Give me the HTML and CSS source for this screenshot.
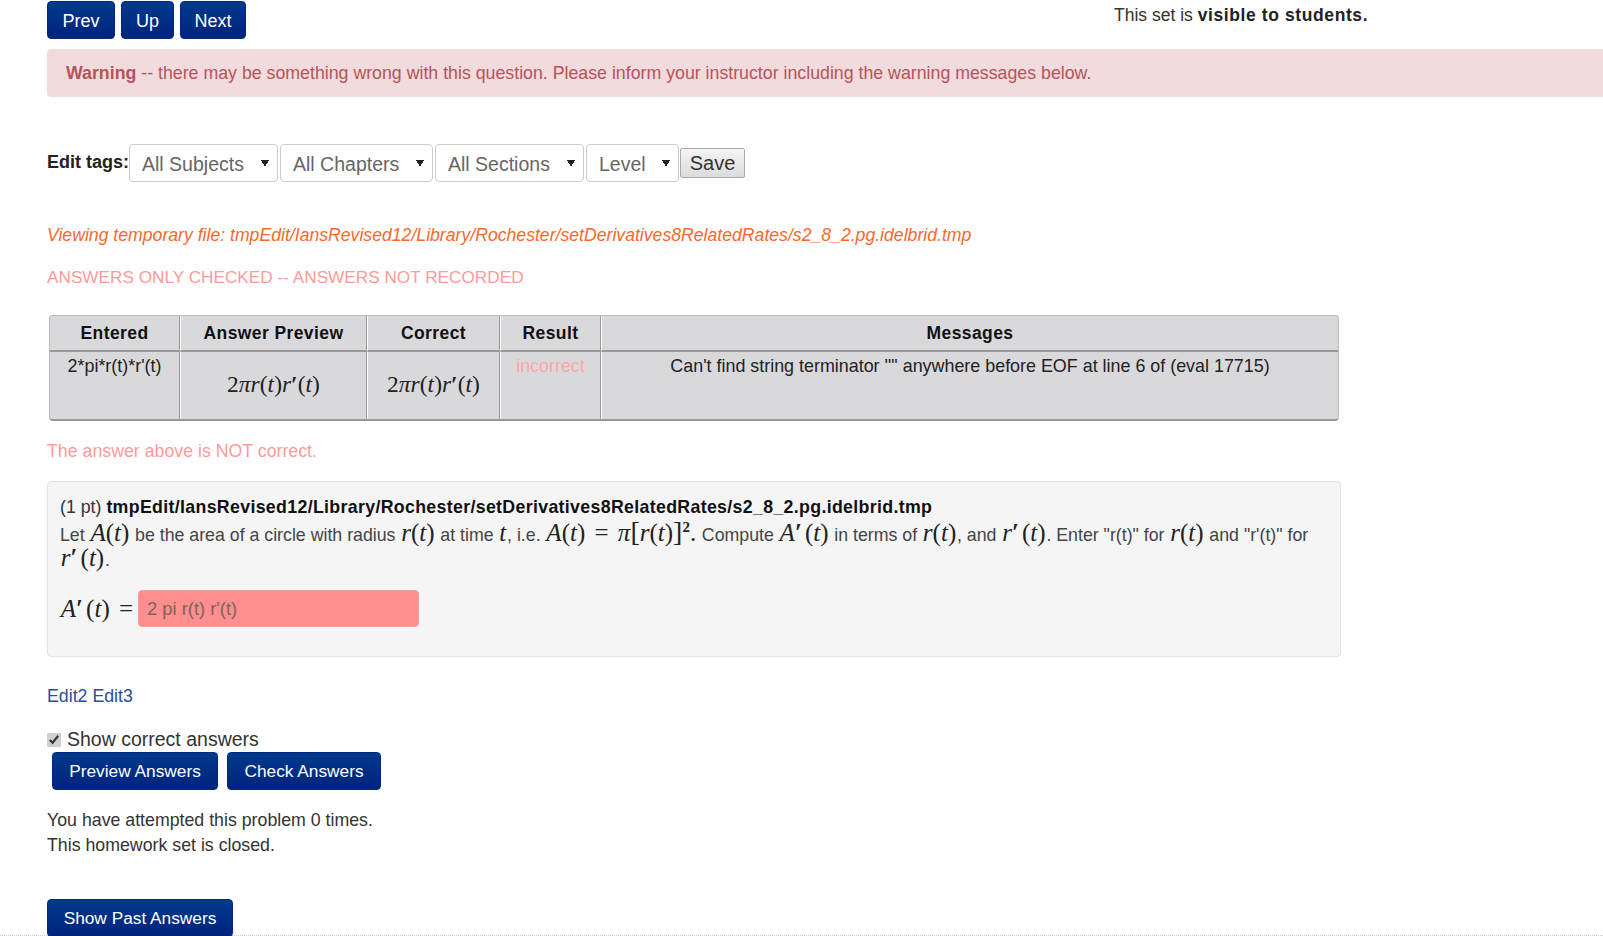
FILE: index.html
```html
<!DOCTYPE html>
<html lang="en">

<head>
    <meta charset="UTF-8">
    <title>Problem</title>
    <link rel="stylesheet" href="styles.css">
</head>

<body>
    <div class="page">
        <div class="topbar">
            <div class="nav">
                <a class="btn btn-prev">Prev</a>
                <a class="btn btn-up">Up</a>
                <a class="btn btn-next">Next</a>
            </div>
            <p class="set-note">This set is <b>visible to students.</b></p>
        </div>

        <div class="warning"><b>Warning</b> -- there may be something wrong with this question. Please inform your instructor including the warning messages below.</div>

        <form class="tags">
            <label class="tags-label">Edit tags:</label>
            <select class="tag-select subjects"><option>All Subjects</option></select>
            <select class="tag-select chapters"><option>All Chapters</option></select>
            <select class="tag-select sections"><option>All Sections</option></select>
            <select class="tag-select level"><option>Level</option></select>
            <button type="button" class="save">Save</button>
        </form>

        <p class="temp-file">Viewing temporary file: tmpEdit/IansRevised12/Library/Rochester/setDerivatives8RelatedRates/s2_8_2.pg.idelbrid.tmp</p>
        <p class="checked-note">ANSWERS ONLY CHECKED -- ANSWERS NOT RECORDED</p>

        <table class="results">
            <tr>
                <th class="col-entered">Entered</th>
                <th class="col-preview">Answer Preview</th>
                <th class="col-correct">Correct</th>
                <th class="col-result">Result</th>
                <th>Messages</th>
            </tr>
            <tr>
                <td>2*pi*r(t)*r'(t)</td>
                <td class="math-cell"><span class="math big"><span class="up">2</span>πr<span class="up">(</span>t<span class="up">)</span>r<span class="prime">′</span><span class="up">(</span>t<span class="up">)</span></span></td>
                <td class="math-cell"><span class="math big"><span class="up">2</span>πr<span class="up">(</span>t<span class="up">)</span>r<span class="prime">′</span><span class="up">(</span>t<span class="up">)</span></span></td>
                <td class="incorrect">incorrect</td>
                <td>Can't find string terminator '"' anywhere before EOF at line 6 of (eval 17715)</td>
            </tr>
        </table>

        <p class="not-correct">The answer above is NOT correct.</p>

        <div class="problem">
            <div class="problem-title">(1 pt) <b>tmpEdit/IansRevised12/Library/Rochester/setDerivatives8RelatedRates/s2_8_2.pg.idelbrid.tmp</b></div>
            <div class="problem-text">
                Let <span class="math">A<span class="up">(</span>t<span class="up">)</span></span> be the area of a circle with radius <span class="math">r<span class="up">(</span>t<span class="up">)</span></span> at time <span class="math">t</span>, i.e. <span class="math">A<span class="up">(</span>t<span class="up">)</span> <span class="up eq">=</span> π<span class="up bracket">[</span>r<span class="up">(</span>t<span class="up">)</span><span class="up bracket">]</span><sup>2</sup><span class="up">.</span></span> Compute <span class="math">A<span class="prime">′</span><span class="up">(</span>t<span class="up">)</span></span> in terms of <span class="math">r<span class="up">(</span>t<span class="up">)</span></span>, and <span class="math">r<span class="prime">′</span><span class="up">(</span>t<span class="up">)</span></span>. Enter "r(t)" for <span class="math">r<span class="up">(</span>t<span class="up">)</span></span> and "r'(t)" for<br>
                <span class="math">r<span class="prime">′</span><span class="up">(</span>t<span class="up">)</span></span>.
            </div>
            <div class="answer-row">
                <span class="math">A<span class="prime">′</span><span class="up">(</span>t<span class="up">)</span> <span class="up eq">=</span></span>
                <input class="answer" type="text" value="2 pi r(t) r'(t)">
            </div>
        </div>

        <p class="edit-links"><a>Edit2</a> <a>Edit3</a></p>

        <label class="show-correct"><input type="checkbox" checked> Show correct answers</label>
        <div class="submit-row">
            <a class="btn btn-preview">Preview Answers</a>
            <a class="btn btn-check">Check Answers</a>
        </div>

        <p class="attempts">You have attempted this problem 0 times.<br>This homework set is closed.</p>

        <a class="btn btn-past">Show Past Answers</a>
    </div>
</body>

</html>
```

FILE: styles.css
```css
html,
body {
    margin: 0;
    height: 936px;
    overflow: hidden;
}

body {
    background: #fff;
    color: #333;
    font-family: "Liberation Sans", Arial, sans-serif;
    font-size: 17.75px;
    line-height: 25px;
}

p {
    margin: 0;
}

.page {
    height: 935px;
    padding-left: 47px;
    border-bottom: 1px dotted #ccc;
}

.btn {
    display: inline-block;
    box-sizing: border-box;
    height: 38px;
    line-height: 37px;
    text-align: center;
    color: #fff;
    font-size: 17.3px;
    background: linear-gradient(#003a8c, #00237d);
    border: 1px solid #002a80;
    border-radius: 4px;
}

.topbar {
    display: grid;
    grid-template-columns: 1067px auto;
    padding-top: 1px;
    height: 38px;
}

.nav {
    display: flex;
    gap: 6px;
}

.nav .btn {
    font-size: 18px;
    line-height: 38px;
}

.btn-prev {
    width: 68px;
}

.btn-up {
    width: 53px;
}

.btn-next {
    width: 66px;
}

.set-note {
    line-height: 28px;
    font-size: 17.5px;
}

.set-note b {
    letter-spacing: 0.6px;
    color: #222;
}

.warning {
    box-sizing: border-box;
    height: 48px;
    margin-top: 10px;
    padding: 0 19px;
    line-height: 49px;
    color: #b5545a;
    background: #f2dbdc;
    border-radius: 4px 0 0 4px;
}

.tags {
    display: flex;
    align-items: center;
    height: 38px;
    margin-top: 47px;
}

.tags-label {
    flex: 0 0 82px;
    white-space: nowrap;
    font-weight: bold;
    font-size: 18px;
    color: #222;
    margin-top: -1px;
}

.tag-select {
    appearance: none;
    box-sizing: border-box;
    height: 38px;
    margin: 0 2px 0 0;
    padding: 2px 12px 0;
    font: 19.5px "Liberation Sans", Arial, sans-serif;
    color: #666;
    border: 1px solid #ccc;
    border-radius: 4px;
    background-color: #fff;
    background-image: linear-gradient(to top right, transparent 50%, #222 50%), linear-gradient(to top left, transparent 50%, #222 50%);
    background-size: 4px 7px, 4px 7px;
    background-position: right 12px center, right 8px center;
    background-repeat: no-repeat;
}

.subjects {
    width: 149px;
}

.chapters {
    width: 153px;
}

.sections {
    width: 149px;
}

.level {
    width: 93px;
    margin-right: 1px;
}

.save {
    box-sizing: border-box;
    width: 65px;
    height: 30px;
    padding: 0;
    font: 20px "Liberation Sans", Arial, sans-serif;
    color: #333;
    background: linear-gradient(#f4f4f4, #dcdcdc);
    border: 1px solid #aaa;
    border-radius: 2px;
}

.temp-file {
    margin-top: 41px;
    font-size: 17.65px;
    font-style: italic;
    color: #f9692b;
}

.checked-note {
    margin-top: 17px;
    font-size: 17.2px;
    color: #ff9a9a;
}

.results {
    box-sizing: border-box;
    width: 1290px;
    margin: 25px 0 0 2px;
    table-layout: fixed;
    border-collapse: separate;
    border-spacing: 0;
    background: #d9d9dc;
    border: 1px solid #bbb;
    border-bottom: 2px solid #999;
    border-radius: 4px;
    color: #222;
}

.results th,
.results td {
    padding: 0 4px;
    text-align: center;
    vertical-align: top;
    border-left: 1px solid #fff;
    border-right: 1px solid #999;
}

.results th:last-child,
.results td:last-child {
    border-right: 0;
}

.results th:first-child,
.results td:first-child {
    border-left: 0;
}

.results th {
    height: 34px;
    line-height: 34px;
    font-size: 17.5px;
    color: #111;
    letter-spacing: 0.4px;
    border-bottom: 2px solid #999;
}

.results td {
    height: 67px;
    font-size: 17.9px;
    line-height: 28px;
}

.col-entered {
    width: 121px;
}

.col-preview {
    width: 177px;
}

.col-correct {
    width: 123px;
}

.col-result {
    width: 91px;
}

.results .math-cell {
    vertical-align: middle;
}

.results .incorrect {
    color: #ffa5a8;
}

.math {
    margin: 0 0.8px;
    font-family: "Liberation Serif", serif;
    font-style: italic;
    font-size: 25px;
    line-height: 0;
    color: #222;
    white-space: nowrap;
}

.math .up {
    font-style: normal;
}

.math .eq {
    margin: 0 3px;
}

.math .bracket {
    font-size: 28px;
}

.math .prime {
    font-style: normal;
    font-weight: bold;
    padding-right: 3px;
}

.math sup {
    font-size: 15px;
    font-weight: bold;
    font-style: normal;
    line-height: 0;
}

.results .math {
    font-size: 23.5px;
}

.results .math .prime {
    padding-right: 0;
}

.not-correct {
    margin-top: 18px;
    color: #ff9a9a;
}

.problem {
    box-sizing: border-box;
    width: 1294px;
    height: 176px;
    margin-top: 17px;
    padding: 13px 12px 0;
    background: #f5f5f6;
    border: 1px solid #e3e3e3;
    border-radius: 4px;
}

.problem-title {
    line-height: 24px;
    color: #333;
}

.problem-title b {
    letter-spacing: 0.33px;
    color: #111;
}

.problem-text {
    line-height: 25px;
    margin-top: 4px;
    color: #444;
}

.answer-row {
    display: flex;
    align-items: center;
    gap: 1px;
    margin-top: 17px;
}

.answer {
    box-sizing: border-box;
    width: 281px;
    height: 37px;
    padding: 4px 8px;
    font: 18.4px "Liberation Sans", Arial, sans-serif;
    color: #80615f;
    background: #ff8e8e;
    border: 1px solid #f0a0a0;
    border-radius: 4px;
}

.edit-links {
    margin-top: 27px;
    color: #2a4d9c;
}

.show-correct {
    display: flex;
    align-items: center;
    gap: 6px;
    margin-top: 18px;
    font-size: 19.5px;
    line-height: 25px;
}

.show-correct input {
    width: 14px;
    height: 14px;
    margin: 1px 0 0;
    accent-color: #d0d0d0;
}

.submit-row {
    display: flex;
    gap: 9px;
    margin: 0 0 0 5px;
}

.btn-preview {
    width: 166px;
}

.btn-check {
    width: 154px;
}

.attempts {
    margin-top: 18px;
}

.btn-past {
    width: 186px;
    margin-top: 41px;
}
```
